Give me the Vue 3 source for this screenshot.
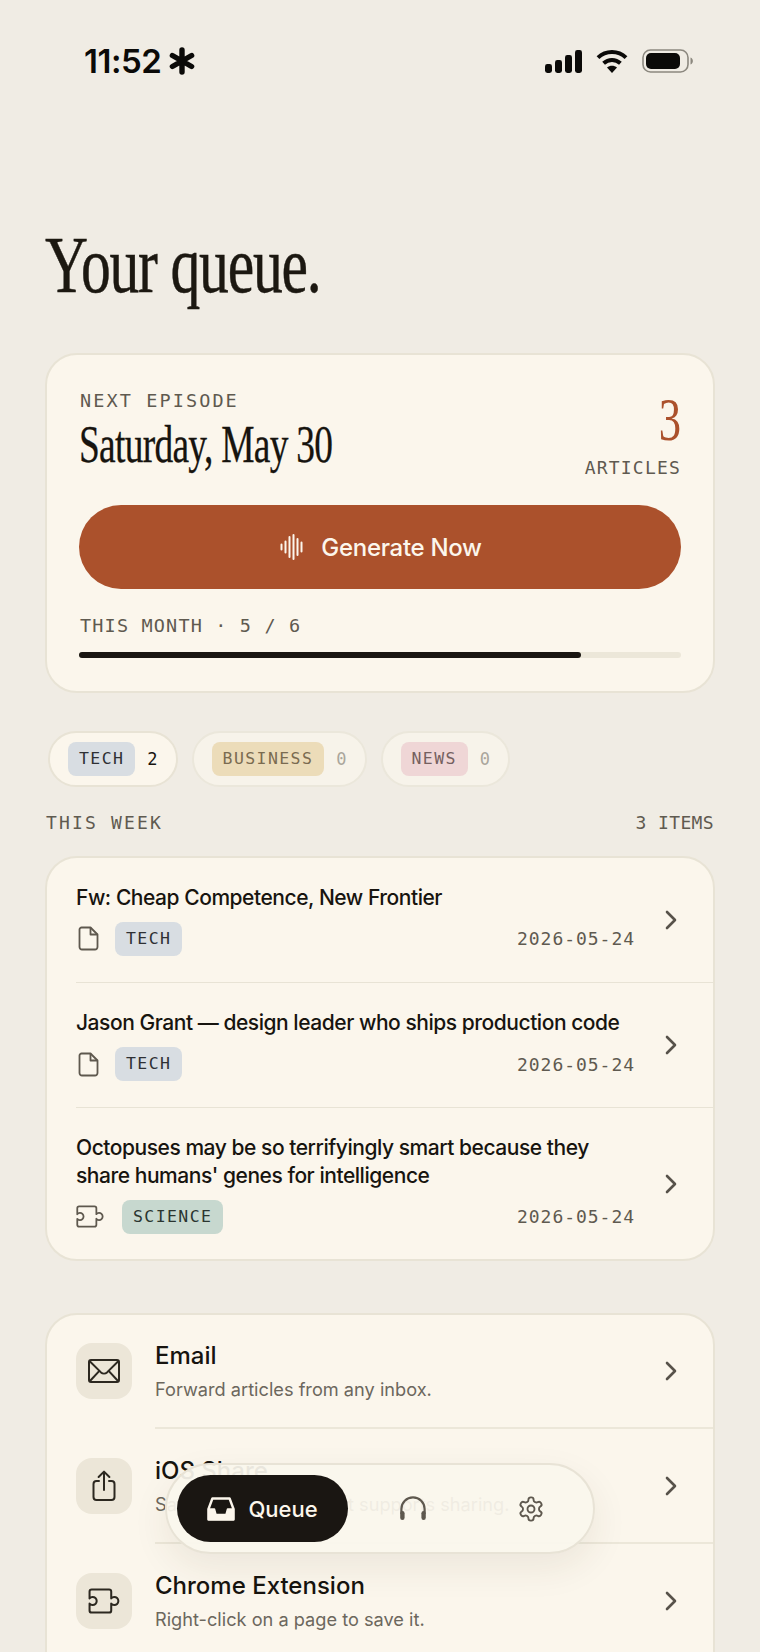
<template>
  <div class="page">
    <div class="status">
      <div class="clock">
        <span>11:52</span>
        <svg class="star" viewBox="0 0 26 28" fill="none" stroke="#0b0a08" stroke-width="5.4" stroke-linecap="round">
          <path d="M13 3v22M3.4 8.5l19.2 11M22.6 8.5l-19.2 11" />
        </svg>
      </div>
      <div class="status-icons">
        <svg width="37" height="23" viewBox="0 0 37 23" fill="#0b0a08">
          <rect x="0" y="14" width="7" height="9" rx="2.4" />
          <rect x="10" y="10" width="7" height="13" rx="2.4" />
          <rect x="20" y="5" width="7" height="18" rx="2.4" />
          <rect x="30" y="0" width="7" height="23" rx="2.4" />
        </svg>
        <svg width="32" height="24" viewBox="0 0 32 24" fill="none" stroke="#0b0a08" stroke-width="4">
          <path d="M2 8.6C9.8 1.2 22.2 1.2 30 8.6" />
          <path d="M7.6 14.2C12.4 9.8 19.6 9.8 24.4 14.2" />
          <path d="M16 24l-5-5.4c2.8-2.4 7.2-2.4 10 0z" fill="#0b0a08" stroke="none" />
        </svg>
        <svg width="51" height="24" viewBox="0 0 51 24">
          <rect x="1" y="1" width="45" height="22" rx="7.5" fill="none" stroke="#8c887f" stroke-width="1.6" />
          <rect x="4" y="4" width="34" height="16" rx="5" fill="#0b0a08" />
          <path d="M48.5 8.5c1.6.6 2.4 2 2.4 3.5s-.8 2.9-2.4 3.5z" fill="#8c887f" />
        </svg>
      </div>
    </div>

    <h1 class="title">Your queue.</h1>

    <section class="card hero">
      <div class="hero-top">
        <div>
          <p class="mono next-label">NEXT EPISODE</p>
          <h2 class="hero-date">Saturday, May 30</h2>
        </div>
        <div class="hero-count">
          <div class="count-num">3</div>
          <p class="mono count-label">ARTICLES</p>
        </div>
      </div>
      <button class="generate">
        <svg width="24" height="26" viewBox="0 0 24 26" fill="none" stroke="#fcf6ec" stroke-width="2" stroke-linecap="round">
          <path d="M1.5 10.5v5M5.5 7.5v11M9.5 3v20M13.5 1v24M17.5 5v16M21.5 8.5v9" />
        </svg>
        <span>Generate Now</span>
      </button>
      <p class="mono month-label">THIS MONTH · 5 / 6</p>
      <div class="progress">
        <div class="progress-fill" :style="{ width: (used / limit) * 100 + '%' }"></div>
      </div>
    </section>

    <div class="chips">
      <div v-for="chip in chips" :key="chip.name" class="chip" :class="{ idle: !chip.count }">
        <span class="mono tag" :class="chip.tone">{{ chip.name }}</span>
        <span class="mono chip-count">{{ chip.count }}</span>
      </div>
    </div>

    <div class="section-head">
      <span class="mono week-label">THIS WEEK</span>
      <span class="mono items-label">3 ITEMS</span>
    </div>

    <section class="card list">
      <div v-for="item in items" :key="item.title" class="item">
        <div class="item-main">
          <p class="item-title">{{ item.title }}</p>
          <div class="item-meta">
            <svg v-if="item.source === 'doc'" class="doc-icon" width="21" height="25" viewBox="0 0 21 25" fill="none" stroke="#5e584e" stroke-width="1.8" stroke-linejoin="round">
              <path d="M3.6 1.5H12.5L19.5 8.5V21A2.5 2.5 0 0 1 17 23.5H4A2.5 2.5 0 0 1 1.5 21V3.6A2.1 2.1 0 0 1 3.6 1.5Z" />
              <path d="M12.5 1.5V8.5H19.5" />
            </svg>
            <svg v-else class="puzzle-icon" width="28" height="23" viewBox="1 2 22 18" fill="none" stroke="#5e584e" stroke-width="1.4" stroke-linejoin="round">
              <path :d="puzzlePath" />
            </svg>
            <span class="mono tag" :class="item.tone">{{ item.tag }}</span>
            <span class="mono item-date">{{ item.date }}</span>
          </div>
        </div>
        <svg class="chevron" width="12" height="20" viewBox="0 0 12 20" fill="none" stroke="#57524a" stroke-width="2.6" stroke-linecap="round" stroke-linejoin="round">
          <path d="M2 2l8 8-8 8" />
        </svg>
      </div>
    </section>

    <section class="card sources">
      <div v-for="src in sources" :key="src.name" class="source">
        <div class="source-icon">
          <svg v-if="src.icon === 'mail'" width="34" height="26" viewBox="0 0 34 26" fill="none" stroke="#2c2820" stroke-width="2" stroke-linejoin="round">
            <rect x="2" y="2" width="30" height="22" rx="2" />
            <path d="M2.5 3L14 14.4c1.7 1.6 4.3 1.6 6 0L31.5 3M2.5 23.5L12.6 12.6M31.5 23.5L21.4 12.6" />
          </svg>
          <svg v-else-if="src.icon === 'share'" width="26" height="32" viewBox="0 0 26 32" fill="none" stroke="#2c2820" stroke-width="2" stroke-linecap="round" stroke-linejoin="round">
            <path d="M8 11H5.5A3 3 0 0 0 2.5 14V27A3 3 0 0 0 5.5 30H20.5A3 3 0 0 0 23.5 27V14A3 3 0 0 0 20.5 11H18" />
            <path d="M13 20V2M7.6 7L13 1.6 18.4 7" />
          </svg>
          <svg v-else width="32" height="26" viewBox="1 2 22 18" fill="none" stroke="#2c2820" stroke-width="1.4" stroke-linejoin="round">
            <path :d="puzzlePath" />
          </svg>
        </div>
        <div class="source-body">
          <div class="source-text">
            <p class="source-name">{{ src.name }}</p>
            <p class="source-desc">{{ src.desc }}</p>
          </div>
          <svg class="chevron" width="12" height="20" viewBox="0 0 12 20" fill="none" stroke="#57524a" stroke-width="2.6" stroke-linecap="round" stroke-linejoin="round">
            <path d="M2 2l8 8-8 8" />
          </svg>
        </div>
      </div>
    </section>

    <nav class="tabbar">
      <div class="tab-active">
        <svg width="28" height="24" viewBox="0 0 28 24" fill="none" stroke="#fcf6ec" stroke-width="2.4" stroke-linejoin="round">
          <path d="M1.5 12L5.4 1.5H22.6L26.5 12V22.5H1.5Z" />
          <path d="M1.5 12H7.4L9 17.6H19L20.6 12H26.5V22.5H1.5Z" fill="#fcf6ec" stroke-width="1.6" />
        </svg>
        <span>Queue</span>
      </div>
      <svg class="tab-phones" width="28" height="26" viewBox="0 0 28 26" fill="none" stroke="#5e584e" stroke-width="2.2" stroke-linecap="round">
        <path d="M2.4 17V13A11.6 11.6 0 0 1 25.6 13V17" />
        <rect x="1.2" y="15" width="4.4" height="9" rx="2.2" fill="#5e584e" stroke="none" />
        <rect x="22.4" y="15" width="4.4" height="9" rx="2.2" fill="#5e584e" stroke="none" />
      </svg>
      <svg class="tab-gear" width="28" height="28" viewBox="0 0 24 24" fill="none" stroke="#5e584e" stroke-width="1.6" stroke-linejoin="round">
        <path d="M12.22 2h-.44a2 2 0 0 0-2 2v.18a2 2 0 0 1-1 1.73l-.43.25a2 2 0 0 1-2 0l-.15-.08a2 2 0 0 0-2.73.73l-.22.38a2 2 0 0 0 .73 2.73l.15.1a2 2 0 0 1 1 1.72v.51a2 2 0 0 1-1 1.74l-.15.09a2 2 0 0 0-.73 2.73l.22.38a2 2 0 0 0 2.73.73l.15-.08a2 2 0 0 1 2 0l.43.25a2 2 0 0 1 1 1.73V20a2 2 0 0 0 2 2h.44a2 2 0 0 0 2-2v-.18a2 2 0 0 1 1-1.73l.43-.25a2 2 0 0 1 2 0l.15.08a2 2 0 0 0 2.73-.73l.22-.39a2 2 0 0 0-.73-2.73l-.15-.08a2 2 0 0 1-1-1.74v-.5a2 2 0 0 1 1-1.74l.15-.09a2 2 0 0 0 .73-2.73l-.22-.38a2 2 0 0 0-2.73-.73l-.15.08a2 2 0 0 1-2 0l-.43-.25a2 2 0 0 1-1-1.73V4a2 2 0 0 0-2-2z" />
        <circle cx="12" cy="12" r="3" />
      </svg>
    </nav>
  </div>
</template>

<script setup>
const used = 5;
const limit = 6;

const puzzlePath =
  'M3.5 3H15.5A1.5 1.5 0 0 1 17 4.5V9.2A2.8 2.8 0 1 1 17 12.8V17.5A1.5 1.5 0 0 1 15.5 19H3.5A1.5 1.5 0 0 1 2 17.5V12.8A2.8 2.8 0 1 0 2 9.2V4.5A1.5 1.5 0 0 1 3.5 3Z';

const chips = [
  { name: 'TECH', tone: 'tone-tech', count: 2 },
  { name: 'BUSINESS', tone: 'tone-business', count: 0 },
  { name: 'NEWS', tone: 'tone-news', count: 0 },
];

const items = [
  { title: 'Fw: Cheap Competence, New Frontier', source: 'doc', tag: 'TECH', tone: 'tone-tech', date: '2026-05-24' },
  { title: 'Jason Grant — design leader who ships production code', source: 'doc', tag: 'TECH', tone: 'tone-tech', date: '2026-05-24' },
  { title: "Octopuses may be so terrifyingly smart because they share humans' genes for intelligence", source: 'ext', tag: 'SCIENCE', tone: 'tone-science', date: '2026-05-24' },
];

const sources = [
  { name: 'Email', desc: 'Forward articles from any inbox.', icon: 'mail' },
  { name: 'iOS Share', desc: 'Save from any app that supports sharing.', icon: 'share' },
  { name: 'Chrome Extension', desc: 'Right-click on a page to save it.', icon: 'puzzle' },
];
</script>

<style>
html,
body {
  margin: 0;
  background: #f0ece4;
}
</style>

<style scoped>
.page {
  position: relative;
  width: 760px;
  height: 1652px;
  overflow: hidden;
  background: #f0ece4;
  color: #17140f;
  font-family: Inter, "Liberation Sans", sans-serif;
}

p,
h1,
h2 {
  margin: 0;
  font-weight: 400;
}

.mono {
  font-family: "DejaVu Sans Mono", monospace;
  color: #5f5a50;
}

/* status bar */
.status {
  display: flex;
  justify-content: space-between;
  align-items: center;
  height: 24px;
  padding: 49px 67px 0 84px;
}

.clock {
  display: flex;
  align-items: center;
  gap: 8px;
  font-size: 33px;
  font-weight: 600;
  color: #0b0a08;
  letter-spacing: -0.5px;
}

.star {
  width: 26px;
  height: 28px;
}

.status-icons {
  display: flex;
  align-items: center;
  gap: 14px;
}

.title {
  margin: 161px 0 0 45px;
  height: 62px;
  line-height: 62px;
  font-family: "Liberation Serif", serif;
  font-size: 80px;
  letter-spacing: -1.6px;
  color: #1c1811;
  white-space: nowrap;
  -webkit-text-stroke: 0.5px #1c1811;
  transform: scaleX(0.745);
  transform-origin: left center;
}

.card {
  box-sizing: border-box;
  width: 670px;
  margin-left: 45px;
  background: #fbf6ec;
  border: 2px solid #e8e3d5;
  border-radius: 32px;
}

/* next episode */
.hero {
  height: 340px;
  margin-top: 57px;
  padding: 34px 32px 0;
}

.hero-top {
  display: flex;
  justify-content: space-between;
  align-items: flex-start;
  height: 116px;
}

.next-label {
  padding-left: 1px;
  font-size: 18.5px;
  line-height: 24px;
  letter-spacing: 2.1px;
}

.hero-date {
  margin-top: 6px;
  font-family: "Liberation Serif", serif;
  font-size: 52px;
  line-height: 52px;
  letter-spacing: -1px;
  color: #17140f;
  white-space: nowrap;
  -webkit-text-stroke: 0.3px #17140f;
  transform: scaleX(0.72);
  transform-origin: left center;
}

.hero-count {
  display: flex;
  flex-direction: column;
  align-items: flex-end;
}

.count-num {
  height: 60px;
  font-family: "Liberation Serif", serif;
  font-size: 62px;
  line-height: 60px;
  color: #ab512c;
  transform: scaleX(0.72);
  transform-origin: right center;
}

.count-label {
  margin-top: 8px;
  font-size: 18px;
  line-height: 22px;
  letter-spacing: 1.2px;
}

.generate {
  display: flex;
  justify-content: center;
  align-items: center;
  gap: 17px;
  width: 100%;
  height: 84px;
  padding-left: 8px;
  border: none;
  border-radius: 42px;
  background: #ab512c;
  color: #fcf6ec;
  font-family: inherit;
  font-size: 24px;
  font-weight: 500;
  letter-spacing: -0.3px;
}

.month-label {
  margin-top: 25px;
  padding-left: 1px;
  font-size: 18.5px;
  line-height: 24px;
  letter-spacing: 1.16px;
}

.progress {
  height: 6px;
  margin-top: 14px;
  background: #ece7d9;
  border-radius: 3px;
}

.progress-fill {
  height: 100%;
  background: #1a1612;
  border-radius: 3px;
}

/* chips */
.chips {
  display: flex;
  gap: 14px;
  margin: 38px 0 0 48px;
}

.chip {
  box-sizing: border-box;
  display: flex;
  align-items: center;
  gap: 12px;
  height: 56px;
  padding: 0 18px;
  background: #fbf6ec;
  border: 2px solid #e8e3d5;
  border-radius: 28px;
}

.chip.idle {
  background: #f7f3ea;
  border-color: #ebe7db;
}

.tag {
  box-sizing: border-box;
  display: inline-block;
  height: 34px;
  padding: 0 11px;
  border-radius: 8px;
  font-size: 16.5px;
  line-height: 34px;
  letter-spacing: 1.4px;
  white-space: nowrap;
}

.tone-tech {
  background: #d8dde2;
  color: #2e3034;
}

.tone-business {
  background: #ecdcb9;
  color: #7a6b50;
}

.tone-news {
  background: #efd6d6;
  color: #75605f;
}

.tone-science {
  background: #c7d8cf;
  color: #2a352f;
}

.chip-count {
  font-size: 17px;
  color: #17140f;
}

.chip.idle .chip-count {
  color: #aaa69c;
}

.section-head {
  display: flex;
  justify-content: space-between;
  align-items: center;
  height: 22px;
  margin: 24px 46px 23px;
}

.week-label {
  font-size: 18px;
  letter-spacing: 2.16px;
}

.items-label {
  font-size: 18px;
  letter-spacing: 0.36px;
}

/* article list */
.list {
  height: 405px;
}

.item {
  box-sizing: border-box;
  display: flex;
  align-items: center;
  gap: 30px;
  margin-left: 29px;
  padding: 25.5px 36px 26px 0;
  border-bottom: 1px solid #e8e3d5;
}

.item + .item {
  padding-top: 26.5px;
  padding-bottom: 25.5px;
}

.item:last-child {
  border-bottom: none;
}

.item-main {
  flex: 1;
  min-width: 0;
}

.item-title {
  font-size: 21px;
  line-height: 27.5px;
  font-weight: 500;
  letter-spacing: -0.46px;
  color: #17140f;
}

.item-meta {
  display: flex;
  align-items: center;
  margin-top: 10.5px;
}

.doc-icon {
  margin: 0 16px 0 2px;
}

.puzzle-icon {
  margin-right: 18px;
}

.item-date {
  margin-left: auto;
  font-size: 18px;
  letter-spacing: 0.96px;
}

.chevron {
  flex: none;
}

/* ways to add */
.sources {
  margin-top: 52px;
  height: 400px;
}

.source {
  display: flex;
  align-items: center;
  gap: 23px;
  padding-left: 29px;
  height: 115px;
}

.source:first-child {
  margin-top: -1px;
}

.source-icon {
  flex: none;
  display: flex;
  justify-content: center;
  align-items: center;
  width: 56px;
  height: 56px;
  margin-top: -2px;
  background: #ece6d8;
  border-radius: 16px;
}

.source-body {
  flex: 1;
  align-self: stretch;
  display: flex;
  align-items: center;
  justify-content: space-between;
  padding-right: 36px;
  border-bottom: 2px solid #ece7d9;
}

.source-name {
  font-size: 24px;
  line-height: 32px;
  font-weight: 500;
  color: #17140f;
}

.source-desc {
  margin-top: 4px;
  font-size: 18.2px;
  line-height: 26px;
  color: #6c675d;
}

/* floating tab bar */
.tabbar {
  position: absolute;
  left: 165px;
  top: 1463px;
  box-sizing: border-box;
  display: flex;
  align-items: center;
  width: 430px;
  height: 91px;
  padding-left: 10px;
  background: rgba(250, 246, 237, 0.93);
  border: 2px solid #e8e3d6;
  border-radius: 46px;
  box-shadow: 0 14px 36px rgba(60, 50, 30, 0.08);
}

.tab-active {
  display: flex;
  justify-content: center;
  align-items: center;
  gap: 13px;
  width: 171px;
  height: 67px;
  background: #1a1612;
  border-radius: 34px;
  color: #fcf6ec;
  font-size: 22px;
  font-weight: 500;
}

.tab-phones {
  margin-left: 51px;
}

.tab-gear {
  margin-left: 90px;
}
</style>
